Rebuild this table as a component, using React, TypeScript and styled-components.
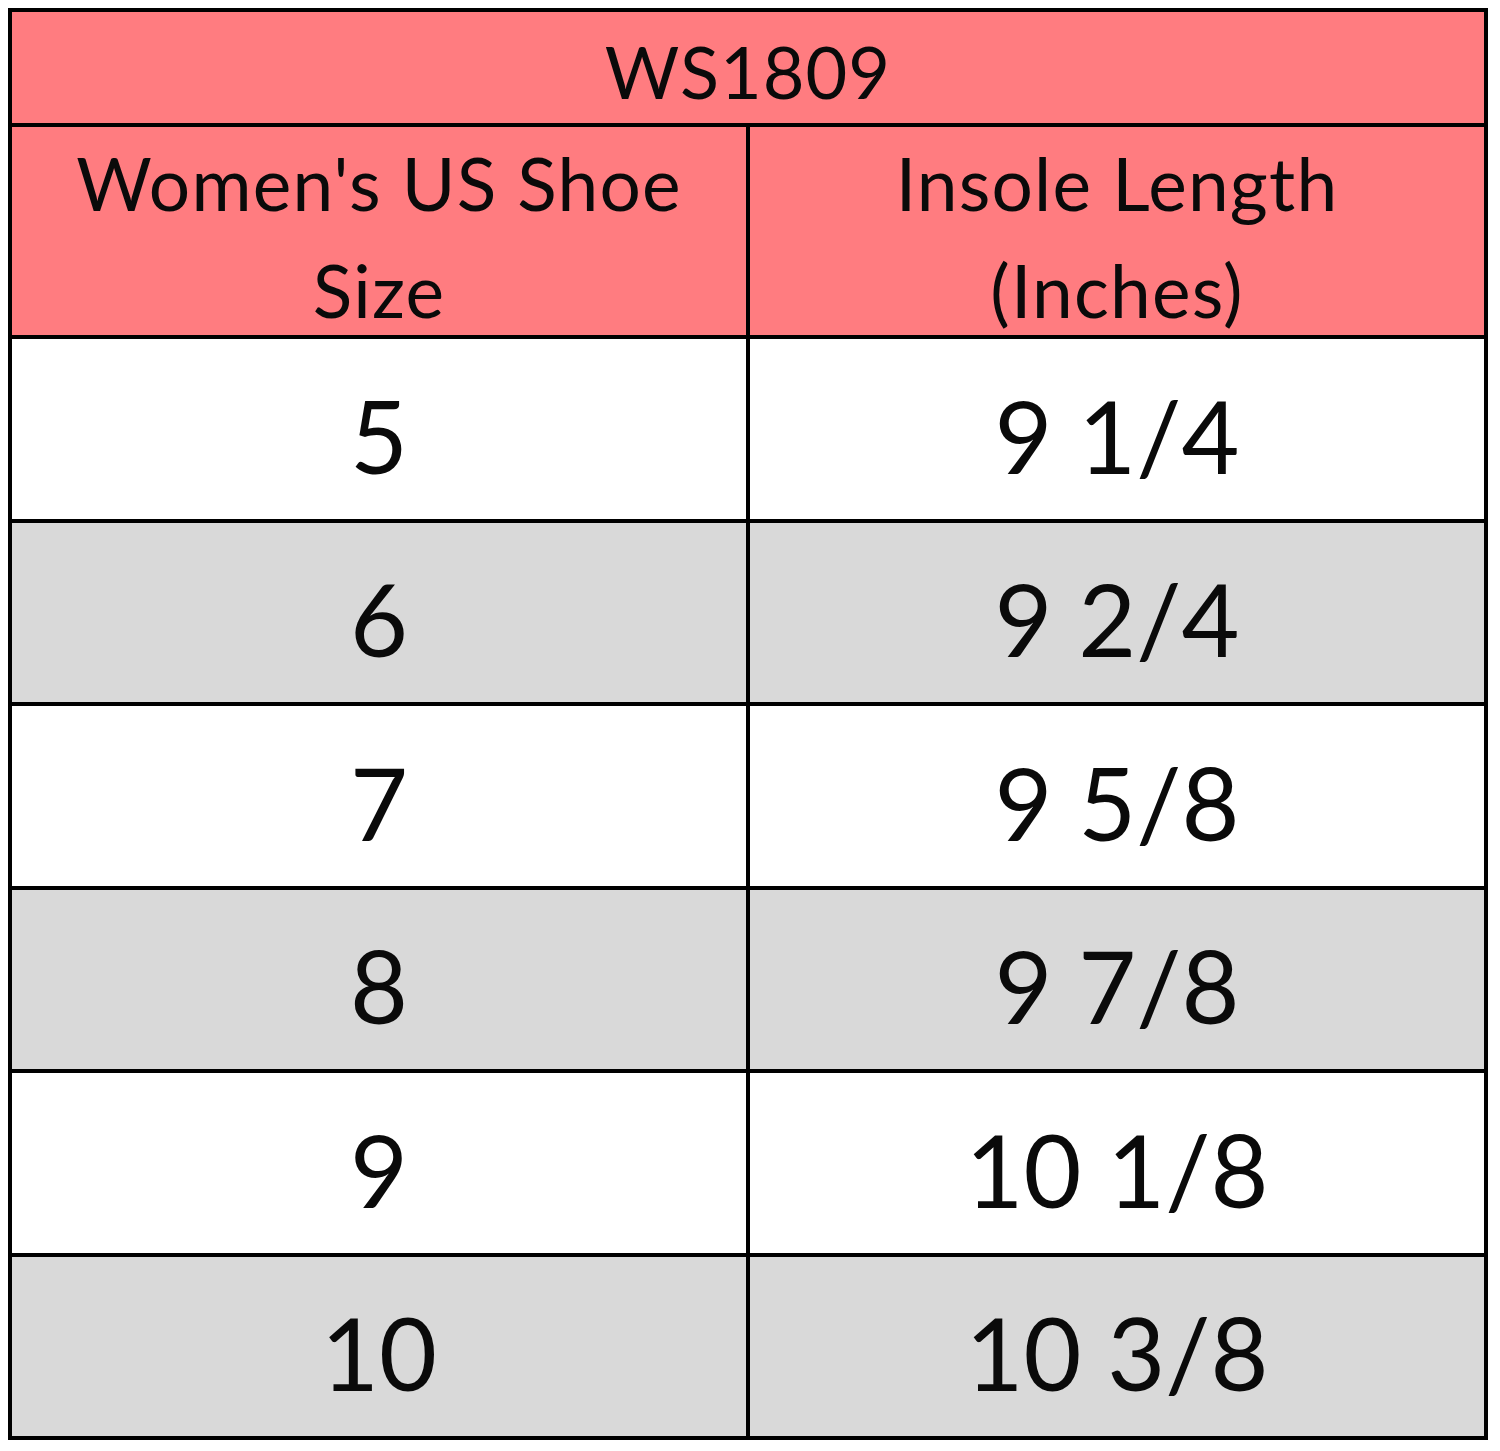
import React from "react";
import styled, { createGlobalStyle } from "styled-components";

const GlobalStyle = createGlobalStyle`
  html, body {
    margin: 0;
    padding: 0;
    background: #ffffff;
  }
  body {
    font-family: Lato, "Open Sans", "Liberation Sans", sans-serif;
    color: #0a0a0a;
  }
`;

const Page = styled.div`
  padding: 8px 0 0 8px;
`;

const Table = styled.div`
  width: 1480px;
  height: 1432px;
  box-sizing: border-box;
  display: grid;
  grid-template-columns: 1fr 1fr;
  grid-template-rows: 111px 208px repeat(6, 1fr);
  gap: 4px;
  padding: 4px;
  background: #000000;
`;

const TitleCell = styled.div`
  grid-column: 1 / span 2;
  background: #ff7c80;
  display: flex;
  align-items: center;
  justify-content: center;
  padding-top: 6px;
  font-size: 72px;
  letter-spacing: 1px;
  line-height: 1;
`;

const HeaderCell = styled.div`
  background: #ff7c80;
  display: flex;
  align-items: center;
  justify-content: center;
  text-align: center;
  padding-top: 12px;
  font-size: 73px;
  letter-spacing: 1.2px;
  line-height: 107px;
`;

const DataCell = styled.div<{ $shaded: boolean }>`
  background: ${(p) => (p.$shaded ? "#d9d9d9" : "#ffffff")};
  display: flex;
  align-items: center;
  justify-content: center;
  padding-top: 12px;
  font-size: 100px;
  line-height: 1;
`;

const rows: [string, string][] = [
  ["5", "9 1/4"],
  ["6", "9 2/4"],
  ["7", "9 5/8"],
  ["8", "9 7/8"],
  ["9", "10 1/8"],
  ["10", "10 3/8"],
];

export default function App() {
  return (
    <>
      <GlobalStyle />
      <Page>
        <Table>
          <TitleCell>WS1809</TitleCell>
          <HeaderCell>
            Women's US Shoe
            <br />
            Size
          </HeaderCell>
          <HeaderCell>
            Insole Length
            <br />
            (Inches)
          </HeaderCell>
          {rows.map(([size, length], i) => (
            <React.Fragment key={size}>
              <DataCell $shaded={i % 2 === 1}>{size}</DataCell>
              <DataCell $shaded={i % 2 === 1}>{length}</DataCell>
            </React.Fragment>
          ))}
        </Table>
      </Page>
    </>
  );
}
